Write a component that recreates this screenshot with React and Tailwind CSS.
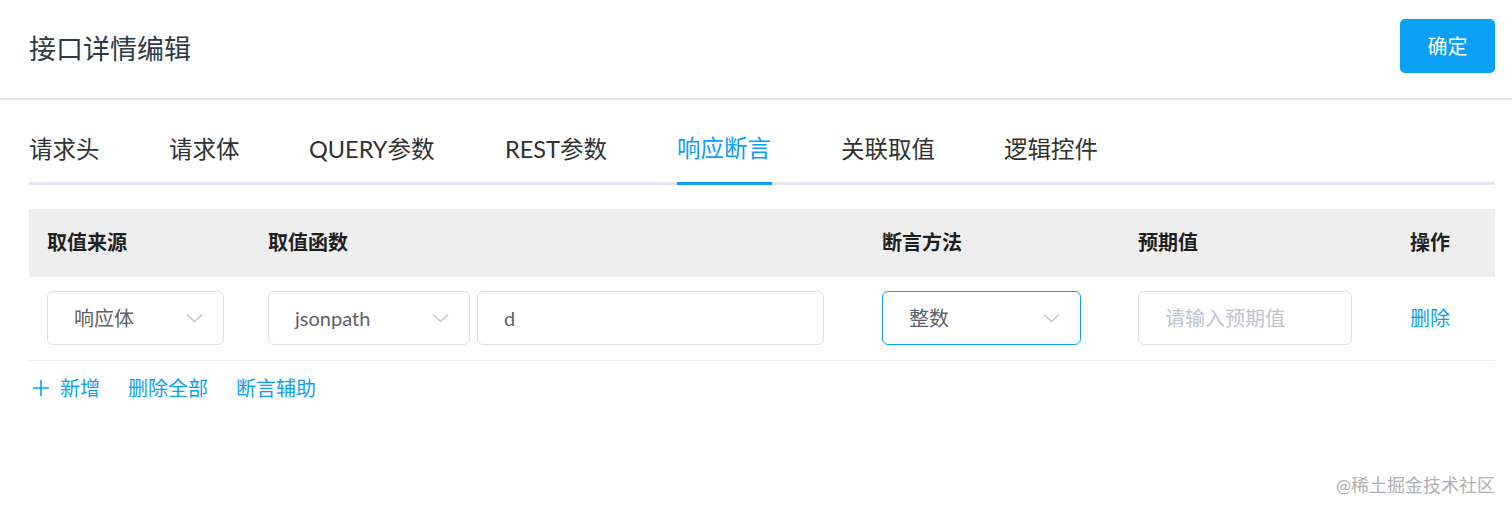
import React from "react";

const font = { fontFamily: '"Lato", "Noto Sans CJK SC", sans-serif' };

function Chevron() {
  return (
    <svg width="17" height="10" viewBox="0 0 17 10" fill="none" className="shrink-0">
      <path d="M1 1.5 L8.5 8.5 L16 1.5" stroke="#c0c4cc" strokeWidth="1.3" />
    </svg>
  );
}

function Select({ value, width, focused }) {
  return (
    <div
      className={`h-[54px] ${width} rounded-[6px] border ${focused ? "border-[#0aa0f5]" : "border-[#dcdfe6]"} bg-white flex items-center justify-between pl-[26px] pr-[20px] text-[20px] text-[#606266]`}
    >
      <span>{value}</span>
      <Chevron />
    </div>
  );
}

export default function App() {
  const tabs = [
    { t: "请求头", w: "w-[71px]" },
    { t: "请求体", w: "w-[71px]" },
    { t: "QUERY参数", w: "w-[127px]" },
    { t: "REST参数", w: "w-[103px]" },
    { t: "响应断言", w: "w-[95px]" },
    { t: "关联取值", w: "w-[94px]" },
    { t: "逻辑控件", w: "w-[94px]" },
  ];
  return (
    <div className="w-[1512px] h-[510px] bg-white relative overflow-hidden" style={font}>
      <div className="h-[100px] border-b-2 border-[#e4e4e4] flex items-center justify-between pl-[29px] pr-[17px]">
        <div className="text-[27px] text-[#2f3a44] leading-none -mt-[2px]">接口详情编辑</div>
        <button className="w-[95px] h-[54px] rounded-[5px] bg-[#0aa0f5] text-white text-[20px] -mt-[6px]">确定</button>
      </div>

      <div className="pl-[29px] pr-[17px]">
        <div className="mt-[18px] flex gap-[69px] border-b-[3px] border-[#e4e7ed] h-[67px]">
          {tabs.map(({ t, w }) => {
            const active = t === "响应断言";
            return (
              <div
                key={t}
                className={`${w} h-[67px] flex items-center pb-[3px] text-[23.5px] whitespace-nowrap ${active ? "text-[#0aa0f5] border-b-[3px] border-[#0aa0f5]" : "text-[#303133]"}`}
              >
                {t}
              </div>
            );
          })}
        </div>

        <div className="mt-[24px]">
          <div className="h-[68px] bg-[#eeeeee] flex items-center text-[20px] font-bold text-[#1f1f1f] pb-[3px]">
            <div className="w-[221px] pl-[18px]">取值来源</div>
            <div className="w-[614px] pl-[18px]">取值函数</div>
            <div className="w-[256px] pl-[18px]">断言方法</div>
            <div className="w-[272px] pl-[18px]">预期值</div>
            <div className="flex-1 pl-[18px]">操作</div>
          </div>
          <div className="h-[84px] border-b border-[#ebeef5] flex items-center pb-[2px]">
            <div className="w-[221px] pl-[18px]">
              <Select value="响应体" width="w-[177px]" />
            </div>
            <div className="w-[614px] pl-[18px] flex gap-[7px]">
              <Select value="jsonpath" width="w-[202px]" />
              <div className="h-[54px] w-[347px] rounded-[6px] border border-[#dcdfe6] flex items-center pl-[26px] text-[20px] text-[#606266]">
                d
              </div>
            </div>
            <div className="w-[256px] pl-[18px]">
              <Select value="整数" width="w-[199px]" focused />
            </div>
            <div className="w-[272px] pl-[18px]">
              <div className="h-[54px] w-[214px] rounded-[6px] border border-[#dcdfe6] flex items-center pl-[26px] text-[20px] text-[#c0c4cc]">
                请输入预期值
              </div>
            </div>
            <div className="flex-1 pl-[18px] text-[20px] text-[#0aa0f5]">删除</div>
          </div>
          <div className="mt-[12px] flex items-center text-[20px] text-[#0aa0f5]">
            <svg width="16" height="16" viewBox="0 0 16 16" className="ml-[4px] mr-[11px]">
              <path d="M8 0 V16 M0 8 H16" stroke="#0aa0f5" strokeWidth="1.6" />
            </svg>
            <span>新增</span>
            <span className="ml-[28px]">删除全部</span>
            <span className="ml-[28px]">断言辅助</span>
          </div>
        </div>
      </div>

      <div className="absolute right-[17px] top-[472px] text-[18px] text-[#b0b0b0]">@稀土掘金技术社区</div>
    </div>
  );
}
